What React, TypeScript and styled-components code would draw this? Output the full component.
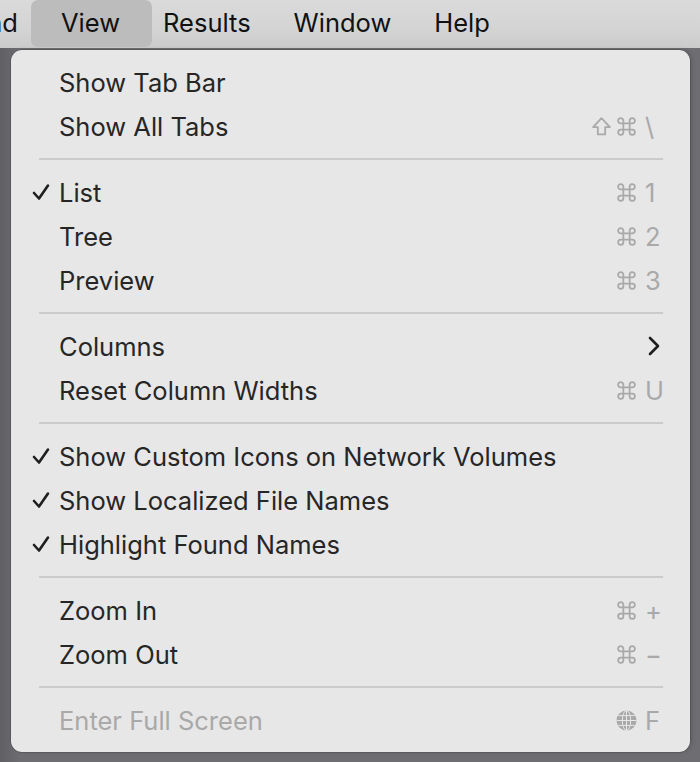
import styled, { createGlobalStyle } from 'styled-components'

const GlobalStyle = createGlobalStyle`
  html, body {
    margin: 0;
    padding: 0;
    background: #6b6b6f;
  }
  body {
    font-family: Inter, "Noto Sans", "DejaVu Sans", sans-serif;
    -webkit-font-smoothing: antialiased;
  }
`

const Screen = styled.div`
  width: 700px;
  height: 762px;
  overflow: hidden;
  display: flex;
  flex-direction: column;
  background: linear-gradient(90deg, #606064 0%, #6e6e72 3%, #6e6e72 100%);
`

const MenuBar = styled.nav`
  height: 48px;
  flex-shrink: 0;
  display: flex;
  align-items: stretch;
  padding-left: 39.5px;
  background: linear-gradient(180deg, #dadada 0%, #d4d4d4 60%, #cbcbcb 100%);
`

const BarItem = styled.div<{ $active?: boolean }>`
  position: relative;
  display: flex;
  align-items: center;
  padding: 0 21.5px 3px;
  font-size: 25.5px;
  color: #111;
  z-index: 0;
  &::before {
    content: '';
    position: absolute;
    top: 0;
    bottom: 1px;
    left: -9px;
    right: -10px;
    border-radius: 7px;
    z-index: -1;
    background: ${p => (p.$active ? '#bcbcbc' : 'transparent')};
  }
`

// the previous menu title, mostly off screen to the left
const Clipped = styled.div`
  display: flex;
  justify-content: flex-end;
  align-items: center;
  width: 0;
  margin-left: -21.5px;
  margin-right: 21.5px;
  padding-bottom: 3px;
  font-size: 25.5px;
  color: #111;
  white-space: nowrap;
`

const Menu = styled.div`
  margin: 2px 10px 10px 11px;
  flex: 1;
  background: #e7e7e7;
  border-radius: 11px;
  padding: 10px 0 10px;
  display: flex;
  flex-direction: column;
  box-shadow: 0 0 0 0.5px rgba(0, 0, 0, 0.25), 2px 0 4px rgba(0, 0, 0, 0.15);
`

const Row = styled.div<{ $disabled?: boolean }>`
  height: 44px;
  display: grid;
  grid-template-columns: 48px 1fr auto;
  align-items: center;
  padding-right: 28px;
  font-size: 25.5px;
  color: ${p => (p.$disabled ? '#a9a9a9' : '#262626')};
`

const Check = styled.span`
  display: flex;
  justify-content: flex-end;
  padding-right: 9px;
  color: #1e1e1e;
  svg {
    display: block;
  }
`

const Label = styled.span`
  white-space: nowrap;
`

const Shortcut = styled.span`
  display: flex;
  align-items: center;
  color: #a9a9a9;
  font-size: 25.5px;
`

const Mods = styled.span`
  display: flex;
  align-items: center;
  gap: 4px;
  padding-right: 8px;
  svg {
    display: block;
  }
`

const Key = styled.span`
  width: 17px;
  text-align: left;
`

const Separator = styled.div`
  height: 22px;
  display: flex;
  align-items: center;
  padding: 0 27px 0 28px;
  &::after {
    content: '';
    flex: 1;
    height: 2px;
    background: #cbcbcb;
  }
`

const CheckIcon = () => (
  <svg width="18" height="18" viewBox="0 0 18 18">
    <path d="M2 10 L7 15.5 L16 2.5" fill="none" stroke="currentColor" strokeWidth="2.6" strokeLinecap="round" strokeLinejoin="round" />
  </svg>
)

const Cmd = () => (
  <svg width="21" height="21" viewBox="0 0 20 20">
    <path
      d="M7 7 H13 V13 H7 Z M7 7 V4.5 A2.5 2.5 0 1 0 4.5 7 H7 M13 7 V4.5 A2.5 2.5 0 1 1 15.5 7 H13 M7 13 V15.5 A2.5 2.5 0 1 1 4.5 13 H7 M13 13 V15.5 A2.5 2.5 0 1 0 15.5 13 H13"
      fill="none"
      stroke="currentColor"
      strokeWidth="1.7"
    />
  </svg>
)

const Shift = () => (
  <svg width="21" height="21" viewBox="0 0 20 20">
    <path d="M10 2 L18 10.5 H13.5 V17.5 H6.5 V10.5 H2 Z" fill="none" stroke="currentColor" strokeWidth="1.7" strokeLinejoin="round" />
  </svg>
)

const Globe = () => (
  <svg width="21" height="21" viewBox="0 0 21 21">
    <circle cx="10.5" cy="10.5" r="10" fill="currentColor" />
    <g fill="none" stroke="#e7e7e7" strokeWidth="1">
      <ellipse cx="10.5" cy="10.5" rx="4.2" ry="10" />
      <line x1="10.5" y1="0.5" x2="10.5" y2="20.5" />
      <line x1="0.5" y1="10.5" x2="20.5" y2="10.5" />
      <path d="M2.4 5.6 H18.6 M2.4 15.4 H18.6" />
    </g>
  </svg>
)

const Chevron = () => (
  <svg width="16" height="22" viewBox="0 0 16 22">
    <path d="M4 3 L12 11 L4 19" fill="none" stroke="#1e1e1e" strokeWidth="2.6" strokeLinecap="round" strokeLinejoin="round" />
  </svg>
)

type Item = {
  label: string
  checked?: boolean
  disabled?: boolean
  mods?: ('cmd' | 'shift' | 'globe')[]
  keyChar?: string
  submenu?: boolean
}

const groups: Item[][] = [
  [
    { label: 'Show Tab Bar' },
    { label: 'Show All Tabs', mods: ['shift', 'cmd'], keyChar: '\\' },
  ],
  [
    { label: 'List', checked: true, mods: ['cmd'], keyChar: '1' },
    { label: 'Tree', mods: ['cmd'], keyChar: '2' },
    { label: 'Preview', mods: ['cmd'], keyChar: '3' },
  ],
  [
    { label: 'Columns', submenu: true },
    { label: 'Reset Column Widths', mods: ['cmd'], keyChar: 'U' },
  ],
  [
    { label: 'Show Custom Icons on Network Volumes', checked: true },
    { label: 'Show Localized File Names', checked: true },
    { label: 'Highlight Found Names', checked: true },
  ],
  [
    { label: 'Zoom In', mods: ['cmd'], keyChar: '+' },
    { label: 'Zoom Out', mods: ['cmd'], keyChar: '−' },
  ],
  [{ label: 'Enter Full Screen', disabled: true, mods: ['globe'], keyChar: 'F' }],
]

const modIcon = { cmd: Cmd, shift: Shift, globe: Globe }

const MenuRow = ({ item }: { item: Item }) => (
  <Row $disabled={item.disabled}>
    <Check>{item.checked && <CheckIcon />}</Check>
    <Label>{item.label}</Label>
    {item.submenu ? (
      <Chevron />
    ) : item.keyChar ? (
      <Shortcut>
        <Mods>
          {item.mods?.map(m => {
            const Icon = modIcon[m]
            return <Icon key={m} />
          })}
        </Mods>
        <Key>{item.keyChar}</Key>
      </Shortcut>
    ) : (
      <span />
    )}
  </Row>
)

export default function App() {
  return (
    <Screen>
      <GlobalStyle />
      <MenuBar>
        <Clipped>Find</Clipped>
        <BarItem $active>View</BarItem>
        <BarItem>Results</BarItem>
        <BarItem>Window</BarItem>
        <BarItem>Help</BarItem>
      </MenuBar>
      <Menu>
        {groups.map((group, gi) => (
          <div key={gi}>
            {gi > 0 && <Separator />}
            {group.map(item => (
              <MenuRow key={item.label} item={item} />
            ))}
          </div>
        ))}
      </Menu>
    </Screen>
  )
}
